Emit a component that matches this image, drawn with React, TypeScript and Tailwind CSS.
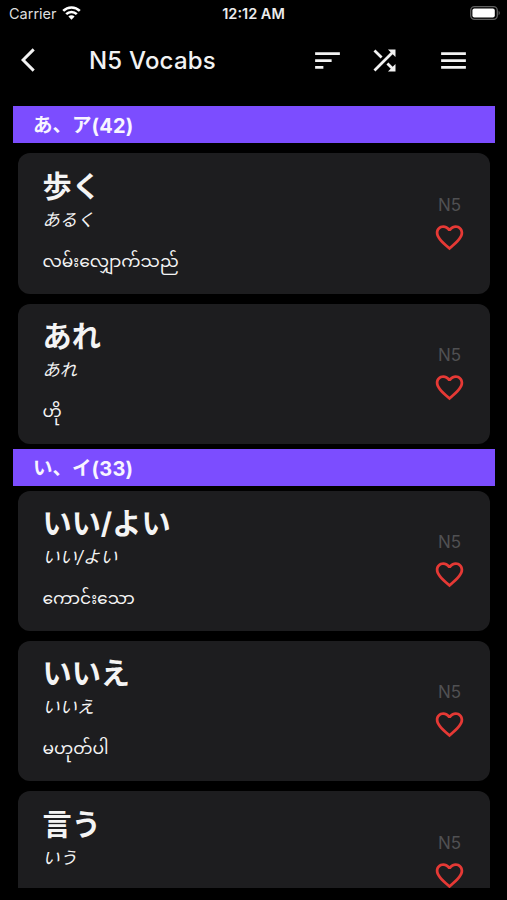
import React from 'react';
import { MdArrowBackIosNew, MdFavoriteBorder, MdMenu, MdShuffle, MdSort } from 'react-icons/md';

interface Vocab {
    word: string;
    reading: string;
    meaning: string;
}

interface VocabSection {
    title: string;
    count: number;
    items: Vocab[];
}

const sections: VocabSection[] = [
    {
        title: 'あ、ア',
        count: 42,
        items: [
            { word: '歩く', reading: 'あるく', meaning: 'လမ်းလျှောက်သည်' },
            { word: 'あれ', reading: 'あれ', meaning: 'ဟို' },
        ],
    },
    {
        title: 'い、イ',
        count: 33,
        items: [
            { word: 'いい/よい', reading: 'いい/よい', meaning: 'ကောင်းသော' },
            { word: 'いいえ', reading: 'いいえ', meaning: 'မဟုတ်ပါ' },
            { word: '言う', reading: 'いう', meaning: 'ပြောသည်' },
        ],
    },
];

const StatusBar: React.FC = () => (
    <div className="grid h-7 grid-cols-3 items-center pl-[9px] pr-[6px] text-[14.5px] text-[#dedede]">
        <div className="flex items-center gap-[5px]">
            <span>Carrier</span>
            <svg className="mb-[2px] h-[14px] w-[19px]" viewBox="0 0 19 14" fill="none" stroke="#fff" strokeWidth="2.6">
                <path d="M1.2 4.9a11.8 11.8 0 0 1 16.6 0" />
                <path d="M4.2 8.2a7.5 7.5 0 0 1 10.6 0" />
                <path d="M9.5 13.8 6.4 10.6a4.4 4.4 0 0 1 6.2 0z" fill="#fff" stroke="none" />
            </svg>
        </div>
        <span className="text-center font-semibold whitespace-nowrap pr-[3px] text-[14.5px] text-[#ececec]">12:12 AM</span>
        <svg className="mb-[2px] h-[14px] w-[31px] justify-self-end" viewBox="0 0 31 14">
            <rect x="0.7" y="0.7" width="26.6" height="12.6" rx="3.8" fill="none" stroke="#606060" strokeWidth="1.3" />
            <rect x="2.4" y="2.4" width="22.4" height="9.2" rx="2" fill="#fff" />
            <path d="M28.6 4.8a2.6 2.6 0 0 1 0 4.4z" fill="#606060" />
        </svg>
    </div>
);

const Header: React.FC = () => (
    <header className="flex h-[64px] items-center pl-[14px] pr-[37px] text-[#f2f2f2]">
        <button className="w-[28px]"><MdArrowBackIosNew size={28} /></button>
        <h1 className="ml-[47px] flex-1 pt-px text-[24px] font-medium tracking-[0.2px]">N5 Vocabs</h1>
        <button className="mr-[24px]"><MdSort size={33} /></button>
        <button className="mr-[36px]"><MdShuffle size={33} /></button>
        <button><MdMenu size={33} /></button>
    </header>
);

const VocabCard: React.FC<{ vocab: Vocab }> = ({ vocab }) => (
    <div className="m-[5px] flex h-[140.3px] shrink-0 rounded-[12px] bg-[#1d1d1f] pl-[24.5px] pr-[24px] text-[#f4f4f4]">
        <div className="flex-1 pt-[14.5px]">
            <div className="h-[38px] text-[29.2px] leading-[38px] font-bold">{vocab.word}</div>
            <div className="h-[27px] text-[17.2px] leading-[27px] italic">{vocab.reading}</div>
            <div className="mt-[14px] h-[28px] text-[17.1px] leading-[28px] whitespace-nowrap">{vocab.meaning}</div>
        </div>
        <div className="flex w-[33px] flex-col items-center pt-[39.5px]">
            <span className="h-[24px] text-[17px] leading-[24px] text-[#505052]">N5</span>
            <button className="mt-[4px] text-[#e53935]"><MdFavoriteBorder size={33} /></button>
        </div>
    </div>
);

export default function App() {
    return (
        <div className="h-[900px] w-[507px] overflow-hidden bg-black font-['Inter','Noto_Sans_CJK_JP','Noto_Sans_Myanmar','Padauk',sans-serif]">
            <StatusBar />
            <Header />
            <main className="mr-[12px] ml-[13px] mt-[14px] flex h-[781.5px] flex-col overflow-hidden">
                {sections.map((section, index) => (
                    <section key={section.title} className="flex shrink-0 flex-col">
                        <h2 className={`flex h-[36.7px] shrink-0 items-center bg-[#7c4dff] pt-[3px] pl-[20px] text-[19.5px] font-bold text-[#f8f5ff] ${index === 0 ? 'mb-[5.6px]' : ''}`}>
                            {section.title}
                            <span className="text-[20px] tracking-[0.2px]">({section.count})</span>
                        </h2>
                        {section.items.map((vocab) => (
                            <VocabCard key={vocab.word} vocab={vocab} />
                        ))}
                    </section>
                ))}
            </main>
        </div>
    );
}
